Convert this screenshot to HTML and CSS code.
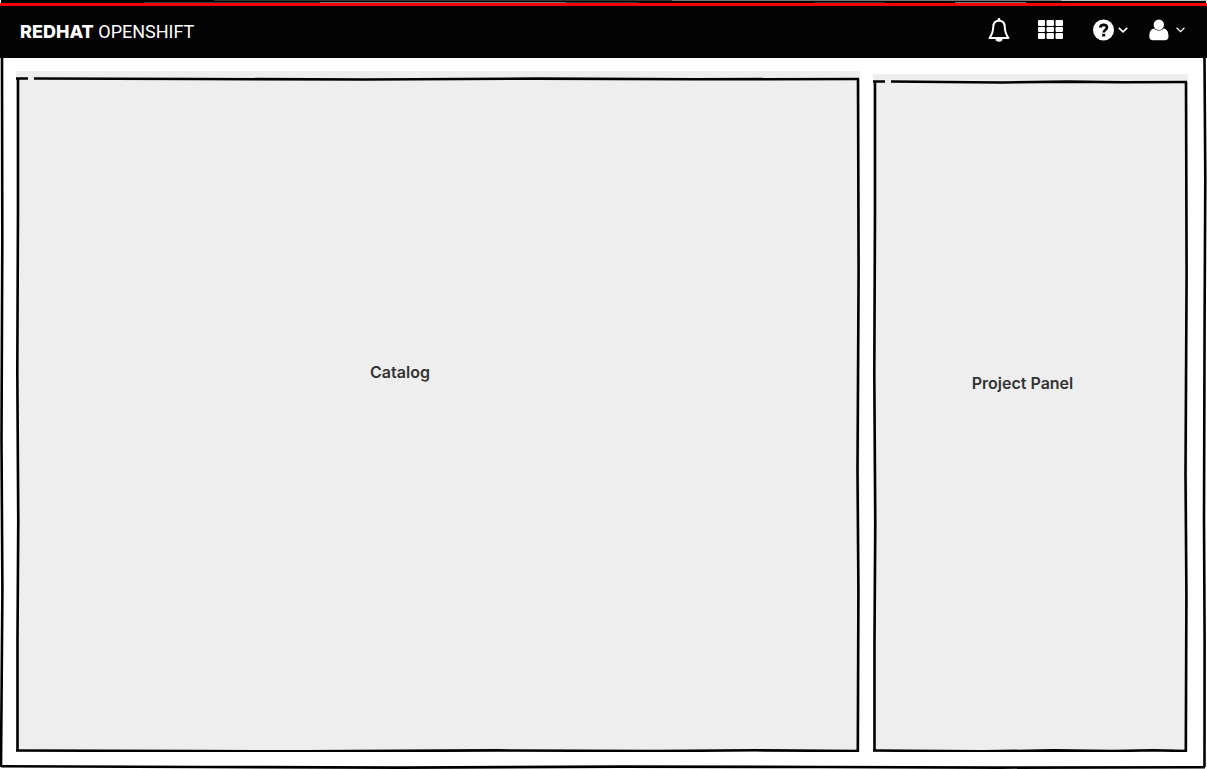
FILE: index.html
```html
<!DOCTYPE html>
<html lang="en">
<head>
<meta charset="utf-8">
<meta name="viewport" content="width=device-width, initial-scale=1">
<title>RedHat OpenShift</title>
<link rel="stylesheet" href="styles.css">
</head>
<body>
<div class="frame">
  <svg class="sketch" viewBox="0 0 1207 769" preserveAspectRatio="none" aria-hidden="true">
    <path class="fill-ink" d="M1 0H1206V3H1Z"/>
    <path class="fill-dark" d="M214 0H672V1H214ZM144 2H320V3H144ZM566 2H638V3H566ZM814 2H885V3H814Z"/>
    <path class="fill-mid" d="M672 0H1061V1H672ZM320 2H566V3H320ZM955 2H1026V3H955Z"/>
    <path class="fill-pale" d="M1061 0H1207V1H1061Z"/>
    <path class="ink" d="M2 58L2.3 240L1.5 440L2.4 590L1 767"/>
    <path class="ink" d="M1204.5 58L1205.3 180L1204.6 320L1204 520L1204.6 640L1204.5 767"/>
    <path class="ink" d="M1 766.3L200 767L400 767.6L620 766.6L820 767L1000 767.6L1205 767.3"/>
  </svg>
  <header class="masthead">
    <a class="brand" href="#"><strong>REDHAT</strong> OPENSHIFT</a>
    <nav class="tools" aria-label="Utilities">
      <button class="tool" type="button" aria-label="Notifications">
        <svg width="22" height="24" viewBox="0 0 22 24"><path d="M11 2.5C7.3 2.8 5.4 5.4 5.3 8.5C5.1 13.5 4.2 16.5 1.5 20H20.5C17.8 16.5 16.9 13.5 16.7 8.5C16.6 5.4 14.7 2.8 11 2.5Z" fill="none" stroke="currentColor" stroke-width="2" stroke-linejoin="round"/><path d="M9.7 2.5V1.3a1.3 1.3 0 0 1 2.600 0V2.500ZM7.500 21H14.500A3.500 2.700 0 0 1 7.500 21Z" fill="currentColor"/></svg>
      </button>
      <button class="tool" type="button" aria-label="Applications">
        <svg width="25" height="20" viewBox="0 0 25 20" fill="currentColor"><rect width="7" height="6" rx="1"/><rect x="8.500" width="7.500" height="6" rx="1"/><rect x="17.500" width="7.500" height="6" rx="1"/><rect y="7" width="7" height="5" rx="1"/><rect x="8.500" y="7" width="7.500" height="5" rx="1"/><rect x="17.500" y="7" width="7.500" height="5" rx="1"/><rect y="13" width="7" height="6" rx="1"/><rect x="8.500" y="13" width="7.500" height="6" rx="1"/><rect x="17.500" y="13" width="7.500" height="6" rx="1"/></svg>
      </button>
      <button class="tool tool-help" type="button" aria-label="Help">
        <svg width="21" height="22" viewBox="0 0 21 22"><circle cx="10.500" cy="11" r="10.500" fill="currentColor"/><path d="M7.200 8.600C7.500 6.700 8.700 5.800 10.500 5.800C12.600 5.800 13.900 7 13.900 8.600C13.900 11 10.700 11 10.700 13.500" fill="none" stroke="#030303" stroke-width="2.700"/><rect x="9.200" y="14.800" width="3" height="2.700" fill="#030303"/></svg>
        <svg width="10" height="6" viewBox="0 0 10 6"><path d="M.8.800L5 4.800L9.200.800" fill="none" stroke="currentColor" stroke-width="1.700"/></svg>
      </button>
      <button class="tool tool-user" type="button" aria-label="User menu">
        <svg width="20" height="22" viewBox="0 0 20 22" fill="currentColor"><circle cx="9.800" cy="5.700" r="5.200"/><path d="M5.200 9.500C7.800 12.200 11.900 12.200 14.500 9.500C18 9.900 19.500 13 19.500 17.500C19.500 20 18.200 21.300 16 21.300H4C1.800 21.300.3 20 .3 17.500C.3 13 1.800 9.900 5.200 9.500Z"/></svg>
        <svg width="9" height="6" viewBox="0 0 9 6"><path d="M.6.800L4.500 4.600L8.400.800" fill="none" stroke="currentColor" stroke-width="1.200"/></svg>
      </button>
    </nav>
  </header>
  <main class="content">
    <section class="panel catalog">
      <svg class="sketch" viewBox="0 0 844 681" preserveAspectRatio="none" aria-hidden="true">
        <path class="ink" d="M0 7.500H12M18 7.500L180 8L350 8.500L520 7.600L680 8.300L843 8"/>
        <path class="ink" d="M2 7L2 140L1.300 300L2.300 450L1.500 570L1.500 680"/>
        <path class="ink" d="M842 8L842.600 200L841.500 400L842.400 520L841.800 680"/>
        <path class="ink" d="M0 679.500L180 680L290 680.400L480 679.400L640 680L740 679.300L843 680"/>
      </svg>
      <h2 class="label">Catalog</h2>
    </section>
    <section class="panel project">
      <svg class="sketch" viewBox="0 0 315 678" preserveAspectRatio="none" aria-hidden="true">
        <path class="ink" d="M0 7.500H12M18 7.500L70 8L130 8.500L195 7.600L250 8.300L314 8"/>
        <path class="ink" d="M2 7L2 140L1.300 300L2.300 450L1.500 570L1.500 677"/>
        <path class="ink" d="M313 8L313.600 200L312.500 400L313.400 520L312.800 677"/>
        <path class="ink" d="M0 676.500L70 677L110 677.400L180 676.400L240 677L280 676.300L314 677"/>
      </svg>
      <h2 class="label">Project Panel</h2>
    </section>
  </main>
</div>
</body>
</html>
```
FILE: styles.css
```css
* {
  box-sizing: border-box;
}

body {
  margin: 0;
  background: #fff;
  color: #333;
  font-family: Inter, "Liberation Sans", sans-serif;
}

.frame {
  position: relative;
  display: flex;
  flex-direction: column;
  min-height: 100vh;
  padding-top: 3px;
}

.sketch {
  position: absolute;
  inset: 0;
  width: 100%;
  height: 100%;
  pointer-events: none;
}

.ink {
  fill: none;
  stroke: #000;
  stroke-width: 2.6px;
  vector-effect: non-scaling-stroke;
}

.fill-ink { fill: #000; }
.fill-dark { fill: #333; }
.fill-mid { fill: #777; }
.fill-pale { fill: #bcc4c2; }

.masthead {
  position: relative;
  display: flex;
  align-items: center;
  justify-content: space-between;
  height: 55px;
  padding: 0 22px 4px 20px;
  border-top: 3px solid #fb0000;
  background: #030303;
  color: #fff;
}

.brand {
  color: inherit;
  font-family: Roboto, sans-serif;
  font-size: 18px;
  line-height: 24px;
  padding-top: 3px;
  text-decoration: none;
}

.brand strong {
  font-family: Inter, sans-serif;
  font-weight: 800;
}

.tools,
.tool {
  display: flex;
  align-items: center;
}

.tool {
  margin: 0;
  padding: 0;
  border: 0;
  background: none;
  color: inherit;
  cursor: pointer;
}

.tools {
  gap: 28px;
}

.tool-help {
  gap: 4px;
  margin-left: 2px;
}

.tool-user {
  gap: 7px;
  margin-left: -7px;
}

.content {
  flex: 1;
  display: grid;
  grid-template-columns: minmax(0, 844fr) minmax(0, 315fr);
  column-gap: 13px;
  padding: 13px 19px 17px 16px;
}

.panel {
  position: relative;
  display: flex;
  align-items: center;
  justify-content: center;
  background: #eee;
}

.catalog {
  padding: 0 76px 80px 0;
}

.project {
  margin-top: 3px;
  padding: 0 16px 60px 0;
}

.label {
  margin: 0;
  font-size: 16px;
  font-weight: 600;
  line-height: 20px;
}
```
